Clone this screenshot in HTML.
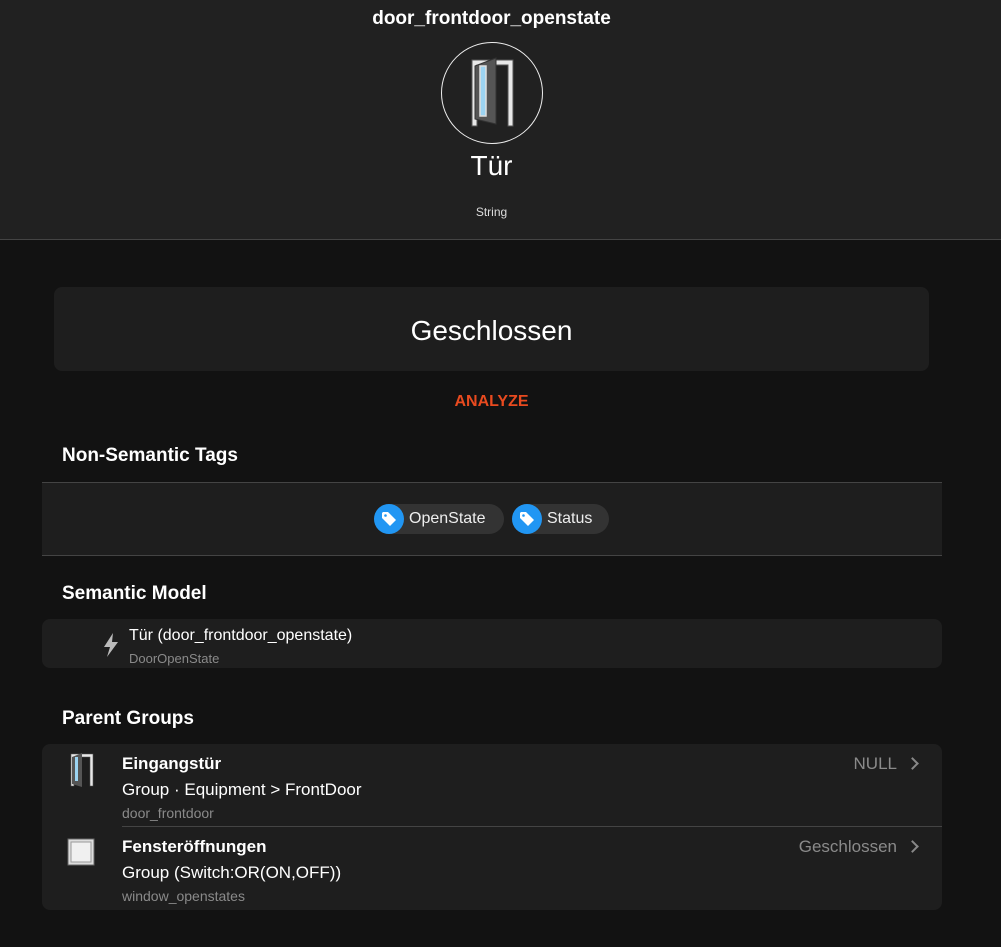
<!DOCTYPE html>
<html><head><meta charset="utf-8"><style>
*{box-sizing:border-box;margin:0;padding:0}
body{width:1001px;height:947px;background:#121212;font-family:"Liberation Sans",sans-serif;color:#fff;position:relative;overflow:hidden}
.abs{position:absolute}
.hdr{left:0;top:0;width:1001px;height:240px;background:#212121;border-bottom:1px solid #444}
.c{text-align:center;width:983px;left:0}
.card{background:#1e1e1e;border-radius:8px}
.h{font-size:19px;font-weight:bold}
.chip{height:30px;border-radius:15px;background:#333;display:flex;align-items:center;font-size:16px;color:#eee}
.chip .ic{width:30px;height:30px;border-radius:15px;background:#2196f3;margin-right:5px;display:flex;align-items:center;justify-content:center}
.gray{color:#8a8a8a}
.chev{width:9px;height:9px;border-top:2px solid #888;border-right:2px solid #888;transform:rotate(45deg)}
</style></head><body>
<div class="abs hdr">
 <div class="abs c" style="top:8px;font-size:19px;font-weight:bold">door_frontdoor_openstate</div>
 <div class="abs" style="left:441px;top:42px;width:102px;height:102px;border:1.5px solid #eee;border-radius:50%"></div>
 <svg class="abs" style="left:466px;top:56px" width="52" height="74" viewBox="0 0 52 74">
  <path d="M6 4H47V70H42V9H11V70H6Z" fill="#e8e8e8" stroke="#555" stroke-width="1"/>
  <path d="M9 10L30 2V68L9 63Z" fill="#555" stroke="#333"/>
  <rect x="14" y="10" width="6" height="50" fill="#9cd4f2" stroke="#e0e0e0" stroke-width="1.5"/>
 </svg>
 <div class="abs c" style="top:150px;font-size:28px">Tür</div>
 <div class="abs c" style="top:205px;font-size:12px;color:#ddd">String</div>
</div>
<div class="abs card" style="left:54px;top:287px;width:875px;height:84px"></div>
<div class="abs c" style="top:315px;font-size:28px">Geschlossen</div>
<div class="abs c" style="top:393px;font-size:16px;color:#e84a1f;font-weight:bold">ANALYZE</div>
<div class="abs h" style="left:62px;top:445px">Non-Semantic Tags</div>
<div class="abs" style="left:42px;top:482px;width:900px;height:74px;background:#1e1e1e;border-top:1px solid #444;border-bottom:1px solid #444"></div>
<div class="abs chip" style="left:374px;top:504px;width:130px"><div class="ic"><svg width="18" height="18" viewBox="0 0 18 18"><path d="M2 3V8L10 16L16 10L8 2H3Z" fill="#fff"/><circle cx="5.5" cy="5.5" r="1.3" fill="#2196f3"/></svg></div>OpenState</div>
<div class="abs chip" style="left:512px;top:504px;width:97px"><div class="ic"><svg width="18" height="18" viewBox="0 0 18 18"><path d="M2 3V8L10 16L16 10L8 2H3Z" fill="#fff"/><circle cx="5.5" cy="5.5" r="1.3" fill="#2196f3"/></svg></div>Status</div>
<div class="abs h" style="left:62px;top:583px">Semantic Model</div>
<div class="abs card" style="left:42px;top:619px;width:900px;height:49px"></div>
<svg class="abs" style="left:102px;top:632px" width="18" height="26" viewBox="0 0 18 26"><path d="M11 1L2 15H8L5 25L16 10H10Z" fill="#bbb"/></svg>
<div class="abs" style="left:129px;top:627px;font-size:16px">Tür (door_frontdoor_openstate)</div>
<div class="abs gray" style="left:129px;top:651px;font-size:13px">DoorOpenState</div>
<div class="abs h" style="left:62px;top:708px">Parent Groups</div>
<div class="abs card" style="left:42px;top:744px;width:900px;height:166px"></div>
<div class="abs" style="left:122px;top:826px;width:820px;height:1px;background:#444"></div>
<svg class="abs" style="left:68px;top:752px" width="28" height="36" viewBox="0 0 28 36"><path d="M3 2H25V34H22V5H6V34H3Z" fill="#e8e8e8" stroke="#555" stroke-width=".6"/><path d="M4 5L14 1V35L4 32Z" fill="#555"/><rect x="7" y="5" width="3" height="24" fill="#9cd4f2"/></svg>
<div class="abs" style="left:122px;top:754px;font-size:17px;font-weight:bold">Eingangstür</div>
<div class="abs" style="left:122px;top:780px;font-size:17px">Group · Equipment &gt; FrontDoor</div>
<div class="abs gray" style="left:122px;top:805px;font-size:14px">door_frontdoor</div>
<div class="abs gray" style="right:104px;top:754px;font-size:17px">NULL</div>
<div class="abs chev" style="left:908px;top:759px"></div>
<svg class="abs" style="left:67px;top:838px" width="28" height="28" viewBox="0 0 28 28"><rect x="1" y="1" width="26" height="26" fill="#ddd" stroke="#666"/><rect x="4" y="4" width="20" height="20" fill="#f0f0f0" stroke="#999"/></svg>
<div class="abs" style="left:122px;top:837px;font-size:17px;font-weight:bold">Fensteröffnungen</div>
<div class="abs" style="left:122px;top:863px;font-size:17px">Group (Switch:OR(ON,OFF))</div>
<div class="abs gray" style="left:122px;top:888px;font-size:14px">window_openstates</div>
<div class="abs gray" style="right:104px;top:837px;font-size:17px">Geschlossen</div>
<div class="abs chev" style="left:908px;top:842px"></div>
</body></html>
